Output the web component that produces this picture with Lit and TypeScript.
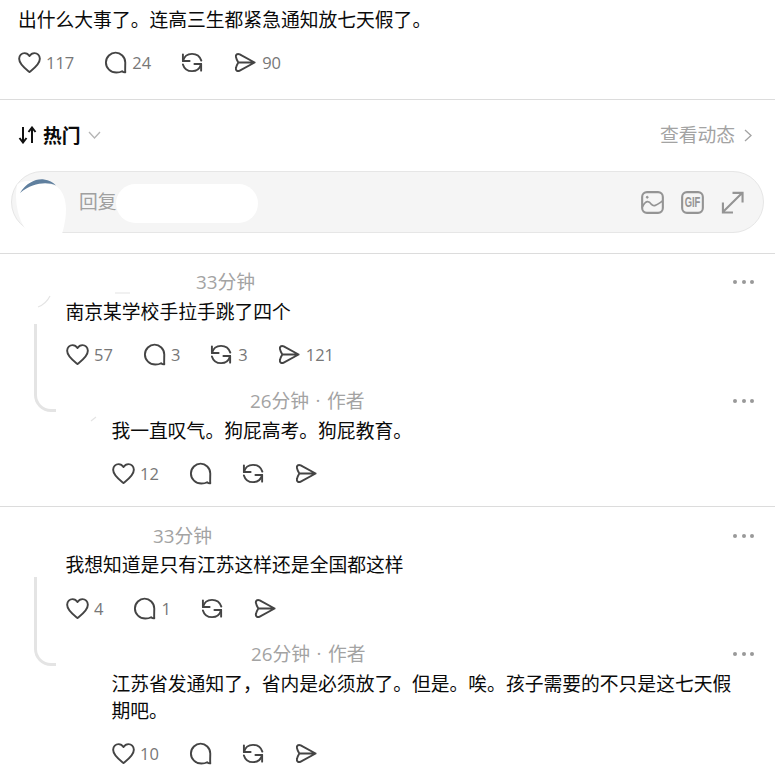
import { LitElement, html, css } from "lit";
import { customElement } from "lit/decorators.js";

const heart = html`<svg class="ic" viewBox="0 0 24 24"><path d="M12 22C8.200 19 1.200 14.200 1.200 8.200 1.200 4.600 3.900 2.200 6.800 2.200c2.200 0 4 1.100 5.200 3.100 1.200-2 3-3.100 5.200-3.100 2.900 0 5.600 2.400 5.600 6 0 6-7 10.800-10.800 13.800Z"/></svg>`;
const bubble = html`<svg class="ic" viewBox="0 0 24 24"><path d="M22.200 22.300c-1.100.1-2.500-.4-3.300-1.200-1.700 1-3.500 1.400-6 1.400C6.900 22.500 2 17.800 2 12 2 6.200 6.900 1.700 12.100 1.700s10.100 4.500 10.100 10.300c0 3.400-.3 6.900 0 10.300Z"/></svg>`;
const repost = html`<svg class="ic" viewBox="0 0 24 24"><path d="M2 10.500C3.200 6 6.700 3 11.500 3c4.800 0 8.400 3 9.700 7M21 13.500C19.800 18 16.300 21 11.500 21c-4.800 0-8.300-3-9.500-7"/><path d="M2 3.500v7h7M21 20.500v-7h-7"/></svg>`;
const send = html`<svg class="ic" viewBox="0 0 24 24"><path d="M21.500 12 6 3.600C3.500 2.300 1.500 3.800 2 6.200 2.300 8 3.300 10 4.500 12 3.300 14 2.300 16 2 17.800 1.500 20.200 3.500 21.700 6 20.400L21.500 12ZM4.500 12h17"/></svg>`;

type Stat = [number | null, number | null, number | null, number | null];

@customElement("app-root")
export class AppRoot extends LitElement {
  static styles = css`
    :host { display: block; width: 775px; height: 768px; overflow: hidden; background: #fff; color: #0a0a0a;
      font-family: "Open Sans", "Noto Sans CJK SC", sans-serif; font-weight: 400; font-size: 18.8px; }
    .post { padding: 0 18px; box-sizing: border-box; border-bottom: 1px solid #dcdcdc; height: 100px; }
    .post-text { height: 39px; line-height: 41px; white-space: nowrap; }
    .actions { display: flex; align-items: center; gap: 30px; height: 46px; color: #777; font-size: 16.5px; }
    .act { display: flex; align-items: center; gap: 5px; }
    .ic { width: 23px; height: 23px; fill: none; stroke: #444; stroke-width: 2; stroke-linejoin: round; stroke-linecap: round; display: block; }
    .sort { display: flex; align-items: center; justify-content: space-between; height: 71px; padding: 0 23px 1px 18px; box-sizing: border-box; }
    .hot { display: flex; align-items: center; font-weight: 700; gap: 6px; color: #0a0a0a; }
    .arrows { width: 19px; height: 18px; fill: none; stroke: #111; stroke-width: 2; }
    .chev { width: 13px; height: 8px; margin-left: 1px; fill: none; stroke: #b5b5b5; stroke-width: 1.3; }
    .view { display: flex; align-items: center; gap: 9px; color: #a3a3a3; }
    .view span { margin-bottom: 2px; }
    .chev-r { width: 8px; height: 13px; fill: none; stroke: #a3a3a3; stroke-width: 1.3; }
    .input { position: relative; margin: 0 11px; height: 62px; box-sizing: border-box; border-radius: 31px;
      background: #f5f5f5; border: 1px solid #e6e6e6; display: flex; align-items: center; padding-left: 67px; color: #a0a0a0; }
    .mask-avatar { position: absolute; left: 0; top: 0; }
    .label { padding-bottom: 3px; }
    .mask-name { width: 142px; height: 39px; border-radius: 20px; background: #fff; margin-top: 3px; margin-left: -1px; }
    .tools { margin-left: auto; display: flex; align-items: center; gap: 17px; padding-right: 19px; }
    .tool { width: 23px; height: 23px; fill: none; stroke: #949494; stroke-width: 2.2; display: block; }
    .gif { font: 700 14.5px "Liberation Sans", sans-serif; fill: #949494; stroke: none; }
    .replies { margin-top: 20px; border-top: 1px solid #dcdcdc; }
    .comment { position: relative; box-sizing: border-box; padding: 12px 21px 10px 66px; border-bottom: 1px solid #dcdcdc; }
    .comment:last-child { border-bottom: 0; }
    .second { padding-top: 13px; }
    .second .reply { margin-top: 7px; }
    .rail { position: absolute; left: 34px; top: 70px; width: 19px; height: 85px; border-left: 3px solid #e4e4e4; border-bottom: 3px solid #e4e4e4; border-bottom-left-radius: 17px; }
    .second .rail { height: 86px; }
    .marks { position: absolute; left: 30px; top: 30px; width: 110px; height: 140px; fill: none; stroke: #e4e4e4; stroke-width: 1.2; }
    .meta { position: relative; display: flex; align-items: center; height: 30px; color: #a3a3a3; white-space: nowrap; }
    .sep { width: 18px; text-align: center; }
    .dots { margin-left: auto; margin-top: 2px; display: flex; gap: 4.5px; }
    .dots i { width: 4px; height: 4px; border-radius: 50%; background: #999; }
    .text { line-height: 27px; padding-top: 3px; margin-left: -0.5px; }
    .second > .text { padding-top: 2px; }
    .reply { margin-left: 46px; margin-top: 8px; }
    .reply .text { padding-right: 20px; }
    .comment .actions { margin-top: 5px; }
    .second > .actions { margin-top: 6px; }
  `;

  private actions(s: Stat) {
    const icons = [heart, bubble, repost, send];
    return html`<div class="actions">${icons.map((ic, i) => html`<div class="act">${ic}${s[i] !== null ? html`<span>${s[i]}</span>` : ""}</div>`)}</div>`;
  }

  private meta(gap: number, t: string, author = false) {
    return html`<div class="meta"><span style="width:${gap}px"></span><span>${t}</span>${author ? html`<span class="sep">·</span><span>作者</span>` : ""}<div class="dots"><i></i><i></i><i></i></div></div>`;
  }

  render() {
    return html`
      <div class="post">
        <div class="post-text">出什么大事了。连高三生都紧急通知放七天假了。</div>
        ${this.actions([117, 24, null, 90])}
      </div>
      <div class="sort">
        <div class="hot">
          <svg class="arrows" viewBox="0 0 19 18"><path d="M5 1v15M1.500 12l3.500 4.500 3.500-4.500M14 17V2M10.500 6 14 1.500 17.500 6"/></svg>
          <span>热门</span>
          <svg class="chev" viewBox="0 0 13 8"><path d="M1 1l5.500 6L12 1"/></svg>
        </div>
        <div class="view"><span>查看动态</span><svg class="chev-r" viewBox="0 0 8 13"><path d="M1 1l6 5.500L1 12"/></svg></div>
      </div>
      <div class="input">
        <svg class="mask-avatar" width="60" height="62" viewBox="0 0 60 62">
          <path d="M5 13C8 9 18 6 44 14C56 22 56 42 50 62H18C6 52 2 28 5 13Z" fill="#fff"/>
          <path d="M8 21C14 11 24 6.500 32 7.500 37 8 41 10 44 13.500 36 9.500 21 10 8 21Z" fill="#5f7f9e"/>
        </svg>
        <span class="label">回复</span>
        <div class="mask-name"></div>
        <div class="tools">
          <svg class="tool" viewBox="0 0 24 24"><rect x="1.200" y="1.200" width="21.600" height="21.600" rx="5"/><path d="M1.500 16.500C5 9.500 8 10 11 14c2.500 3 6 0 11.500-3.500" stroke-width="1.800"/><circle cx="6.500" cy="6.500" r="1" fill="#949494" stroke-width="1"/></svg>
          <svg class="tool" viewBox="0 0 24 24"><rect x="1.200" y="1.200" width="21.600" height="21.600" rx="5"/><text class="gif" transform="translate(12 17.200) scale(.68 1)" text-anchor="middle">GIF</text></svg>
          <svg class="tool" viewBox="0 0 24 24"><path d="M2 22 22 2M12 2h10.500v10M2 12v10.500h10.500" /></svg>
        </div>
      </div>
      <div class="replies">
        <div class="comment">
          <div class="rail"></div>
          <svg class="marks" viewBox="0 0 110 140"><path d="M20 12Q16 20 8 23M85 9H100M66 133l-5 4"/></svg>
          ${this.meta(130, "33分钟")}
          <div class="text">南京某学校手拉手跳了四个</div>
          ${this.actions([57, 3, 3, 121])}
          <div class="reply">
            ${this.meta(138, "26分钟", true)}
            <div class="text">我一直叹气。狗屁高考。狗屁教育。</div>
            ${this.actions([12, null, null, null])}
          </div>
        </div>
        <div class="comment second">
          <div class="rail"></div>
          ${this.meta(87, "33分钟")}
          <div class="text">我想知道是只有江苏这样还是全国都这样</div>
          ${this.actions([4, 1, null, null])}
          <div class="reply">
            ${this.meta(139, "26分钟", true)}
            <div class="text">江苏省发通知了，省内是必须放了。但是。唉。孩子需要的不只是这七天假期吧。</div>
            ${this.actions([10, null, null, null])}
          </div>
        </div>
      </div>
    `;
  }
}
